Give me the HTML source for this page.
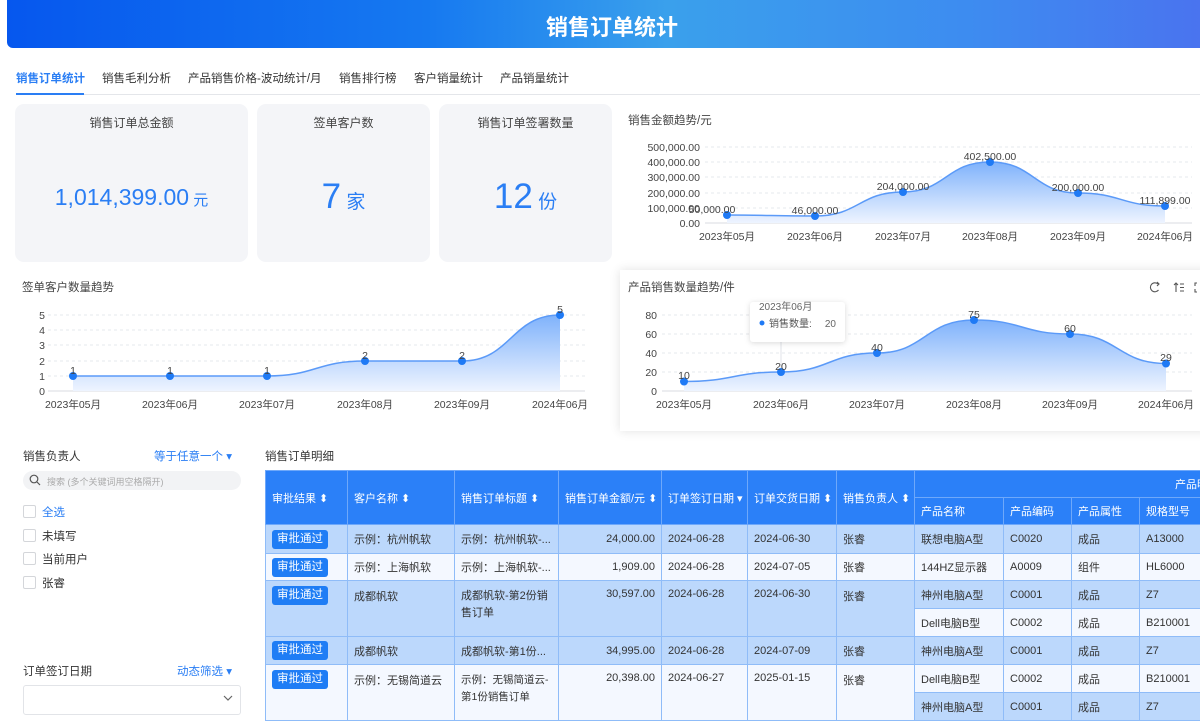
<!DOCTYPE html>
<html><head><meta charset="utf-8">
<style>
*{margin:0;padding:0;box-sizing:border-box}
body{width:1200px;height:704px;overflow:hidden;background:#fff;font-family:"Liberation Sans","Noto Sans CJK SC",sans-serif;color:#333;position:relative}
.a{position:absolute;white-space:nowrap}
.hdr{left:7px;top:0;width:1200px;height:48px;border-radius:0 0 6px 6px;background:linear-gradient(90deg,#0657ee 0%,#1679f0 35%,#3aa0ec 55%,#3d8cf0 80%,#4a73ef 100%)}
.tab{top:70px;font-size:11.5px;color:#333}
.card{background:#f4f5f8;border-radius:9px;top:104px;height:158px}
.ct{font-size:12px;color:#444;width:100%;text-align:center;top:10px}
.val{color:#2a7ef4;width:100%;text-align:center}
table{border-collapse:collapse;font-size:11px;color:#333}
td,th{border:1px solid #8fbcf8;padding:0 6px;font-weight:normal;text-align:left;vertical-align:middle;overflow:hidden}
th{background:#2b80f8;color:#fff;border-color:#6ea8fa}
.b{background:#bcd8fc}.w{background:#f4f8ff}
.btn{display:inline-block;background:#1f7df5;color:#fff;border-radius:3px;padding:0 5px;height:19px;line-height:19px;font-size:11.5px}
.r{text-align:right}
.cb{width:13px;height:13px;border:1px solid #d4d6da;border-radius:2px;left:23px}
.ft{font-size:11.5px;left:42px}
.t{vertical-align:top;padding-top:7px}
</style></head><body>
<div class="a hdr"></div>
<div class="a" style="left:0;width:1224px;top:10px;text-align:center;color:#fff;font-size:22px;font-weight:bold">销售订单统计</div>

<div class="a tab" style="left:16px;color:#2a7ef4;font-weight:bold">销售订单统计</div>
<div class="a tab" style="left:102px">销售毛利分析</div>
<div class="a tab" style="left:188px">产品销售价格-波动统计/月</div>
<div class="a tab" style="left:339px">销售排行榜</div>
<div class="a tab" style="left:414px">客户销量统计</div>
<div class="a tab" style="left:500px">产品销量统计</div>
<div class="a" style="left:16px;top:94px;width:1184px;height:1px;background:#e4e6ea"></div>
<div class="a" style="left:16px;top:93px;width:68px;height:2px;background:#2a7ef4"></div>

<div class="a card" style="left:15px;width:233px"><div class="a ct">销售订单总金额</div><div class="a val" style="top:80px;font-size:23px">1,014,399.00<span style="font-size:15px"> 元</span></div></div>
<div class="a card" style="left:257px;width:173px"><div class="a ct">签单客户数</div><div class="a val" style="top:73px;font-size:35px">7<span style="font-size:19px"> 家</span></div></div>
<div class="a card" style="left:439px;width:173px"><div class="a ct">销售订单签署数量</div><div class="a val" style="top:73px;font-size:35px">12<span style="font-size:19px"> 份</span></div></div>

<div class="a" style="left:620px;top:270px;width:590px;height:161px;background:#fff;box-shadow:0 0 10px rgba(0,0,0,.12)"></div>

<svg class="a" style="left:0;top:0" width="1200" height="704" font-family="Liberation Sans, Noto Sans CJK SC, sans-serif" font-size="10.5" fill="#444">
<defs><linearGradient id="g" x1="0" y1="0" x2="0" y2="1"><stop offset="0" stop-color="#7fb2fb"/><stop offset="1" stop-color="#eef4ff"/></linearGradient></defs>
<text x="628" y="124" font-size="11.5" fill="#444">销售金额趋势/元</text>
<g stroke="#e6e8ec" stroke-dasharray="3,3"><line x1="705" y1="147" x2="1192" y2="147"/><line x1="705" y1="162" x2="1192" y2="162"/><line x1="705" y1="177" x2="1192" y2="177"/><line x1="705" y1="193" x2="1192" y2="193"/><line x1="705" y1="208" x2="1192" y2="208"/></g>
<line x1="705" y1="223" x2="1192" y2="223" stroke="#d8dbe0"/>
<g text-anchor="end"><text x="700" y="151">500,000.00</text><text x="700" y="166">400,000.00</text><text x="700" y="181">300,000.00</text><text x="700" y="197">200,000.00</text><text x="700" y="212">100,000.00</text><text x="700" y="227">0.00</text></g>
<path d="M727,215 C771,215 771,216 815,216 C859,216 859,192 903,192 C946,192 946,162 990,162 C1034,162 1034,193 1078,193 C1121,193 1121,206 1165,206 L1165,223 L727,223Z" fill="url(#g)"/>
<path d="M727,215 C771,215 771,216 815,216 C859,216 859,192 903,192 C946,192 946,162 990,162 C1034,162 1034,193 1078,193 C1121,193 1121,206 1165,206" fill="none" stroke="#5b9af8" stroke-width="1.5"/>
<g fill="#1f7af5"><circle cx="727" cy="215" r="4"/><circle cx="815" cy="216" r="4"/><circle cx="903" cy="192" r="4"/><circle cx="990" cy="162" r="4"/><circle cx="1078" cy="193" r="4"/><circle cx="1165" cy="206" r="4"/></g>
<g text-anchor="middle"><text x="712" y="213">50,000.00</text><text x="815" y="214">46,000.00</text><text x="903" y="190">204,000.00</text><text x="990" y="160">402,500.00</text><text x="1078" y="191">200,000.00</text><text x="1165" y="204">111,899.00</text>
<text x="727" y="240">2023年05月</text><text x="815" y="240">2023年06月</text><text x="903" y="240">2023年07月</text><text x="990" y="240">2023年08月</text><text x="1078" y="240">2023年09月</text><text x="1165" y="240">2024年06月</text></g>

<text x="22" y="291" font-size="11.5">签单客户数量趋势</text>
<g stroke="#e6e8ec" stroke-dasharray="3,3"><line x1="48" y1="315" x2="585" y2="315"/><line x1="48" y1="330" x2="585" y2="330"/><line x1="48" y1="345" x2="585" y2="345"/><line x1="48" y1="361" x2="585" y2="361"/><line x1="48" y1="376" x2="585" y2="376"/></g>
<line x1="48" y1="391" x2="585" y2="391" stroke="#d8dbe0"/>
<g text-anchor="end"><text x="45" y="319">5</text><text x="45" y="334">4</text><text x="45" y="349">3</text><text x="45" y="365">2</text><text x="45" y="380">1</text><text x="45" y="395">0</text></g>
<path d="M73,376 L267,376 C316,376 316,361 365,361 L462,361 C511,361 511,315 560,315 L560,391 L73,391Z" fill="url(#g)"/>
<path d="M73,376 L267,376 C316,376 316,361 365,361 L462,361 C511,361 511,315 560,315" fill="none" stroke="#5b9af8" stroke-width="1.5"/>
<g fill="#1f7af5"><circle cx="73" cy="376" r="4"/><circle cx="170" cy="376" r="4"/><circle cx="267" cy="376" r="4"/><circle cx="365" cy="361" r="4"/><circle cx="462" cy="361" r="4"/><circle cx="560" cy="315" r="4"/></g>
<g text-anchor="middle"><text x="73" y="374">1</text><text x="170" y="374">1</text><text x="267" y="374">1</text><text x="365" y="359">2</text><text x="462" y="359">2</text><text x="560" y="313">5</text>
<text x="73" y="408">2023年05月</text><text x="170" y="408">2023年06月</text><text x="267" y="408">2023年07月</text><text x="365" y="408">2023年08月</text><text x="462" y="408">2023年09月</text><text x="560" y="408">2024年06月</text></g>

<text x="628" y="291" font-size="11.5">产品销售数量趋势/件</text>
<g fill="none" stroke="#555" stroke-width="1.1"><path d="M1158,284 A4.5,4.5 0 1 0 1158.5,290"/><path d="M1157,282 l2,2 -2,2"/><path d="M1176,283 v9 M1174,285 l2,-2 2,2 M1180,284 h4 M1180,287.5 h4 M1180,291 h4"/><path d="M1197,283 h-2 v3 M1197,292 h-2 v-3"/></g>
<g stroke="#e6e8ec" stroke-dasharray="3,3"><line x1="662" y1="315" x2="1192" y2="315"/><line x1="662" y1="334" x2="1192" y2="334"/><line x1="662" y1="353" x2="1192" y2="353"/><line x1="662" y1="372" x2="1192" y2="372"/></g>
<line x1="662" y1="391" x2="1192" y2="391" stroke="#d8dbe0"/>
<line x1="781" y1="305" x2="781" y2="391" stroke="#e0e3e8"/>
<g text-anchor="end"><text x="657" y="319">80</text><text x="657" y="338">60</text><text x="657" y="357">40</text><text x="657" y="376">20</text><text x="657" y="395">0</text></g>
<path d="M684,381.5 C733,381.5 733,372 781,372 C829,372 829,353 877,353 C925,353 925,320 974,320 C1022,320 1022,334 1070,334 C1118,334 1118,363.5 1166,363.5 L1166,391 L684,391Z" fill="url(#g)"/>
<path d="M684,381.5 C733,381.5 733,372 781,372 C829,372 829,353 877,353 C925,353 925,320 974,320 C1022,320 1022,334 1070,334 C1118,334 1118,363.5 1166,363.5" fill="none" stroke="#5b9af8" stroke-width="1.5"/>
<g fill="#1f7af5"><circle cx="684" cy="381.5" r="4"/><circle cx="781" cy="372" r="4"/><circle cx="877" cy="353" r="4"/><circle cx="974" cy="320" r="4"/><circle cx="1070" cy="334" r="4"/><circle cx="1166" cy="363.5" r="4"/></g>
<g text-anchor="middle"><text x="684" y="379">10</text><text x="781" y="370">20</text><text x="877" y="351">40</text><text x="974" y="318">75</text><text x="1070" y="332">60</text><text x="1166" y="361">29</text>
<text x="684" y="408">2023年05月</text><text x="781" y="408">2023年06月</text><text x="877" y="408">2023年07月</text><text x="974" y="408">2023年08月</text><text x="1070" y="408">2023年09月</text><text x="1166" y="408">2024年06月</text></g>
<rect x="750" y="302" width="95" height="40" rx="3" fill="#fff" style="filter:drop-shadow(0 1px 3px rgba(0,0,0,.15))"/>
<text x="759" y="310" font-size="10" fill="#666">2023年06月</text>
<circle cx="762" cy="323" r="2.5" fill="#1f7af5"/><text x="769" y="327" font-size="10" fill="#555">销售数量:</text><text x="836" y="327" font-size="10" fill="#666" text-anchor="end">20</text>
</svg>

<div class="a" style="left:23px;top:448px;font-size:11.5px">销售负责人</div>
<div class="a" style="left:154px;top:448px;font-size:11.5px;color:#2a7ef4">等于任意一个 ▾</div>
<div class="a" style="left:23px;top:471px;width:218px;height:19px;background:#f2f3f5;border-radius:10px"></div>
<svg class="a" style="left:29px;top:474px" width="12" height="12"><circle cx="5" cy="5" r="3.8" fill="none" stroke="#555" stroke-width="1.2"/><line x1="8" y1="8" x2="11" y2="11" stroke="#555" stroke-width="1.2"/></svg>
<div class="a" style="left:47px;top:475px;font-size:9px;color:#aaa">搜索 (多个关键词用空格隔开)</div>
<div class="a cb" style="top:505px"></div><div class="a ft" style="top:504px;color:#2a7ef4">全选</div>
<div class="a cb" style="top:529px"></div><div class="a ft" style="top:528px">未填写</div>
<div class="a cb" style="top:552px"></div><div class="a ft" style="top:551px">当前用户</div>
<div class="a cb" style="top:576px"></div><div class="a ft" style="top:575px">张睿</div>
<div class="a" style="left:23px;top:663px;font-size:11.5px">订单签订日期</div>
<div class="a" style="left:177px;top:663px;font-size:11.5px;color:#2a7ef4">动态筛选 ▾</div>
<div class="a" style="left:23px;top:685px;width:218px;height:30px;border:1px solid #e2e4e8;border-radius:3px"></div>
<svg class="a" style="left:223px;top:694px" width="10" height="8"><path d="M1,2 L5,6 L9,2" fill="none" stroke="#666" stroke-width="1.2"/></svg>

<div class="a" style="left:265px;top:448px;font-size:11.5px">销售订单明细</div>
<table class="a" style="left:265px;top:470px;width:960px;table-layout:fixed">
<colgroup><col style="width:82px"><col style="width:107px"><col style="width:104px"><col style="width:103px"><col style="width:86px"><col style="width:89px"><col style="width:78px"><col style="width:89px"><col style="width:68px"><col style="width:68px"><col style="width:86px"></colgroup>
<tr style="height:27px"><th rowspan="2">审批结果 ⬍</th><th rowspan="2">客户名称 ⬍</th><th rowspan="2">销售订单标题 ⬍</th><th rowspan="2">销售订单金额/元 ⬍</th><th rowspan="2">订单签订日期 ▾</th><th rowspan="2">订单交货日期 ⬍</th><th rowspan="2">销售负责人 ⬍</th><th colspan="4" style="text-align:right">产品明细</th></tr>
<tr style="height:27px"><th>产品名称</th><th>产品编码</th><th>产品属性</th><th>规格型号</th></tr>
<tr class="b" style="height:29px"><td><span class="btn">审批通过</span></td><td>示例：杭州帆软</td><td>示例：杭州帆软-...</td><td class="r">24,000.00</td><td>2024-06-28</td><td>2024-06-30</td><td>张睿</td><td>联想电脑A型</td><td>C0020</td><td>成品</td><td>A13000</td></tr>
<tr class="w" style="height:27px"><td><span class="btn">审批通过</span></td><td>示例：上海帆软</td><td>示例：上海帆软-...</td><td class="r">1,909.00</td><td>2024-06-28</td><td>2024-07-05</td><td>张睿</td><td>144HZ显示器</td><td>A0009</td><td>组件</td><td>HL6000</td></tr>
<tr class="b" style="height:28px"><td rowspan="2" style="vertical-align:top;padding-top:5px"><span class="btn">审批通过</span></td><td rowspan="2" class="t">成都帆软</td><td rowspan="2" class="t" style="white-space:normal;line-height:17px">成都帆软-第2份销售订单</td><td rowspan="2" class="r t">30,597.00</td><td rowspan="2" class="t">2024-06-28</td><td rowspan="2" class="t">2024-06-30</td><td rowspan="2" class="t">张睿</td><td>神州电脑A型</td><td>C0001</td><td>成品</td><td>Z7</td></tr>
<tr class="w" style="height:28px"><td>Dell电脑B型</td><td>C0002</td><td>成品</td><td>B210001</td></tr>
<tr class="b" style="height:28px"><td><span class="btn">审批通过</span></td><td>成都帆软</td><td>成都帆软-第1份...</td><td class="r">34,995.00</td><td>2024-06-28</td><td>2024-07-09</td><td>张睿</td><td>神州电脑A型</td><td>C0001</td><td>成品</td><td>Z7</td></tr>
<tr class="w" style="height:28px"><td rowspan="2" style="vertical-align:top;padding-top:5px"><span class="btn">审批通过</span></td><td rowspan="2" class="t">示例：无锡简道云</td><td rowspan="2" class="t" style="white-space:normal;line-height:17px;font-size:10.5px;padding-right:2px">示例：无锡简道云-第1份销售订单</td><td rowspan="2" class="r t">20,398.00</td><td rowspan="2" class="t">2024-06-27</td><td rowspan="2" class="t">2025-01-15</td><td rowspan="2" class="t">张睿</td><td>Dell电脑B型</td><td>C0002</td><td>成品</td><td>B210001</td></tr>
<tr class="b" style="height:28px"><td>神州电脑A型</td><td>C0001</td><td>成品</td><td>Z7</td></tr>
</table>
</body></html>
